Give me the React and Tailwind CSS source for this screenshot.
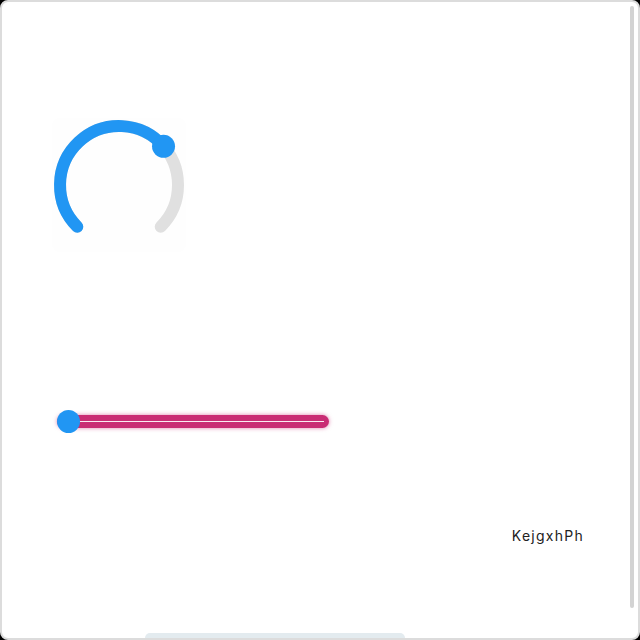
import React from 'react'

const BLUE = '#2196f3'

function Knob() {
  // 270° dial, centre (67,67), r 59 — value arc ends at -41°
  return (
    <div className="w-[134px] h-[134px] rounded-lg bg-[#fefefe] ml-[50px] mt-[116px]">
      <svg width="134" height="134" viewBox="0 0 134 134">
        <path
          d="M 25.28 108.72 A 59 59 0 1 1 108.72 108.72"
          fill="none"
          stroke="#e0e0e0"
          strokeWidth="12"
          strokeLinecap="round"
        />
        <path
          d="M 25.28 108.72 A 59 59 0 1 1 111.53 28.29"
          fill="none"
          stroke={BLUE}
          strokeWidth="12"
          strokeLinecap="round"
        />
        <circle cx="111.53" cy="28.29" r="11.5" fill={BLUE} />
      </svg>
    </div>
  )
}

function Slider() {
  return (
    <div className="relative w-[272px] h-[23px] ml-[55px] mt-[158px] flex items-center">
      <div className="w-full h-[13px] rounded-full bg-[#c92c74] shadow-[0_0_4px_rgba(201,44,116,0.6)] flex items-center px-[5px]">
        <div className="w-full h-px bg-white/90" />
      </div>
      <div className="absolute left-0 top-0 w-[23px] h-[23px] rounded-full bg-[#2196f3]" />
    </div>
  )
}

export default function App() {
  return (
    <div className="w-[640px] h-[640px] bg-black">
      <div
        className="relative w-full h-full bg-white rounded-lg border-2 border-[#dcdcdc] overflow-hidden"
        style={{ fontFamily: 'Inter, "Open Sans", sans-serif' }}
      >
        <div className="flex flex-col">
          <Knob />
          <Slider />
          <div className="flex justify-end pr-[54px] mt-[93px]">
            <span className="text-[14px] leading-5 tracking-[0.09em] text-[#222]">KejgxhPh</span>
          </div>
        </div>

        {/* scroll bars */}
        <div className="absolute right-[4px] top-[4px] w-[4px] h-[602px] rounded-full bg-[#d3d3d3]" />
        <div className="absolute left-[143px] bottom-0 w-[260px] h-[5px] rounded-t-md bg-[#e3ebef]" />
      </div>
    </div>
  )
}
